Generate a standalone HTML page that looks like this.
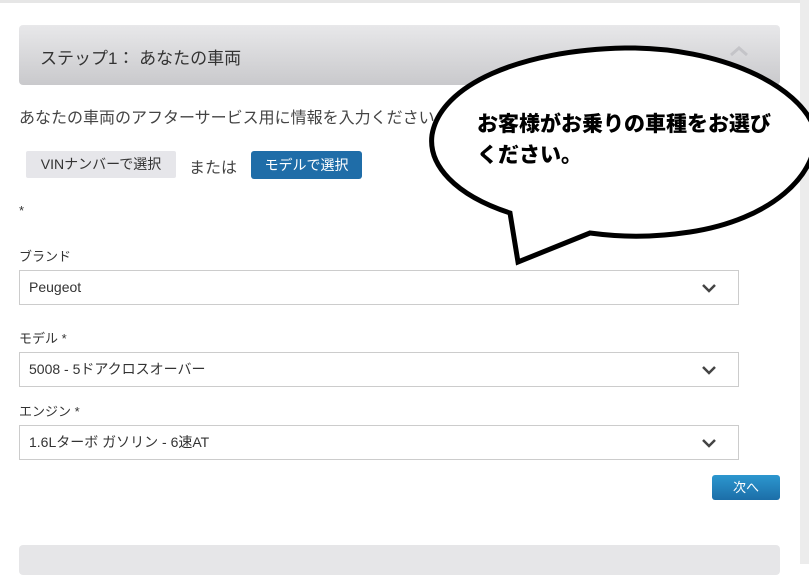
<!DOCTYPE html>
<html><head><meta charset="utf-8"><style>
*{margin:0;padding:0;box-sizing:border-box}
body{width:809px;height:564px;overflow:hidden;background:#fff;position:relative;font-family:"Liberation Sans","Noto Sans CJK JP",sans-serif;color:#333}
.topb{position:absolute;left:0;top:0;width:809px;height:3px;background:#e6e6e6}
.rb{position:absolute;left:800px;top:0;width:9px;height:564px;background:#ececec}
.hdr{position:absolute;left:19px;top:25px;width:761px;height:60px;border-radius:4px;background:linear-gradient(#e8e8ea,#c9c9cc)}
.hdr span{position:absolute;left:21px;top:19px;font-size:17px;color:#333}
.intro{position:absolute;left:19px;top:104px;font-size:16px;color:#444;white-space:nowrap}
.b1{position:absolute;left:26px;top:151px;width:150px;height:27px;background:#e6e6ea;border-radius:2px;font-size:14px;line-height:27px;text-align:center;color:#333}
.or{position:absolute;left:189px;top:154px;font-size:16px;color:#444}
.b2{position:absolute;left:251px;top:151px;width:111px;height:28px;background:#1f6da8;border-radius:3px;color:#fff;font-size:14px;line-height:28px;text-align:center}
.lbl{position:absolute;left:19px;font-size:13px;color:#333}
.sel{position:absolute;left:19px;width:720px;height:35px;border:1px solid #ccc;font-size:14px;line-height:33px;padding-left:9px;color:#333}
.sel svg{position:absolute;right:21px;top:12px}
.next{position:absolute;left:712px;top:475px;width:68px;height:25px;border-radius:3px;background:linear-gradient(#2c97cf,#1c6ea8);color:#fff;font-size:13px;line-height:25px;text-align:center}
.foot{position:absolute;left:19px;top:545px;width:761px;height:30px;border-radius:4px;background:#e6e6e8}
</style></head><body>
<div class="topb"></div><div class="rb"></div>
<div class="hdr"><span>ステップ1：&nbsp;あなたの車両</span>
<svg style="position:absolute;left:710px;top:20px" width="20" height="12"><path d="M2 10 L10 3 L18 10" stroke="#c4c4c8" stroke-width="3" fill="none"/></svg></div>
<div class="intro">あなたの車両のアフターサービス用に情報を入力ください</div>
<div class="b1">VINナンバーで選択</div>
<div class="or">または</div>
<div class="b2">モデルで選択</div>
<div class="lbl" style="top:203px">*</div>
<div class="lbl" style="top:246px">ブランド</div>
<div class="sel" style="top:270px">Peugeot<svg width="16" height="10"><path d="M2 2 L8 8 L14 2" stroke="#444" stroke-width="2.5" fill="none"/></svg></div>
<div class="lbl" style="top:328px">モデル *</div>
<div class="sel" style="top:352px">5008 - 5ドアクロスオーバー<svg width="16" height="10"><path d="M2 2 L8 8 L14 2" stroke="#444" stroke-width="2.5" fill="none"/></svg></div>
<div class="lbl" style="top:401px">エンジン *</div>
<div class="sel" style="top:425px">1.6Lターボ ガソリン - 6速AT<svg width="16" height="10"><path d="M2 2 L8 8 L14 2" stroke="#444" stroke-width="2.5" fill="none"/></svg></div>
<div class="next">次へ</div>
<div class="foot"></div>
<svg style="position:absolute;left:0;top:0" width="809" height="564">
<path d="M510 213 C455 195 428 165 432 135 C440 85 520 50 625 48 C720 47 800 85 815 130 C820 175 770 220 690 232 C650 238 620 237 590 233 L518 262 Z" fill="#fff" stroke="#000" stroke-width="5" stroke-linejoin="miter"/>
<text x="477" y="131" font-family="'Noto Sans CJK JP',sans-serif" font-weight="900" font-size="21" fill="#000">お客様がお乗りの車種をお選び</text>
<text x="477" y="162" font-family="'Noto Sans CJK JP',sans-serif" font-weight="900" font-size="21" fill="#000">ください。</text>
</svg>
</body></html>
